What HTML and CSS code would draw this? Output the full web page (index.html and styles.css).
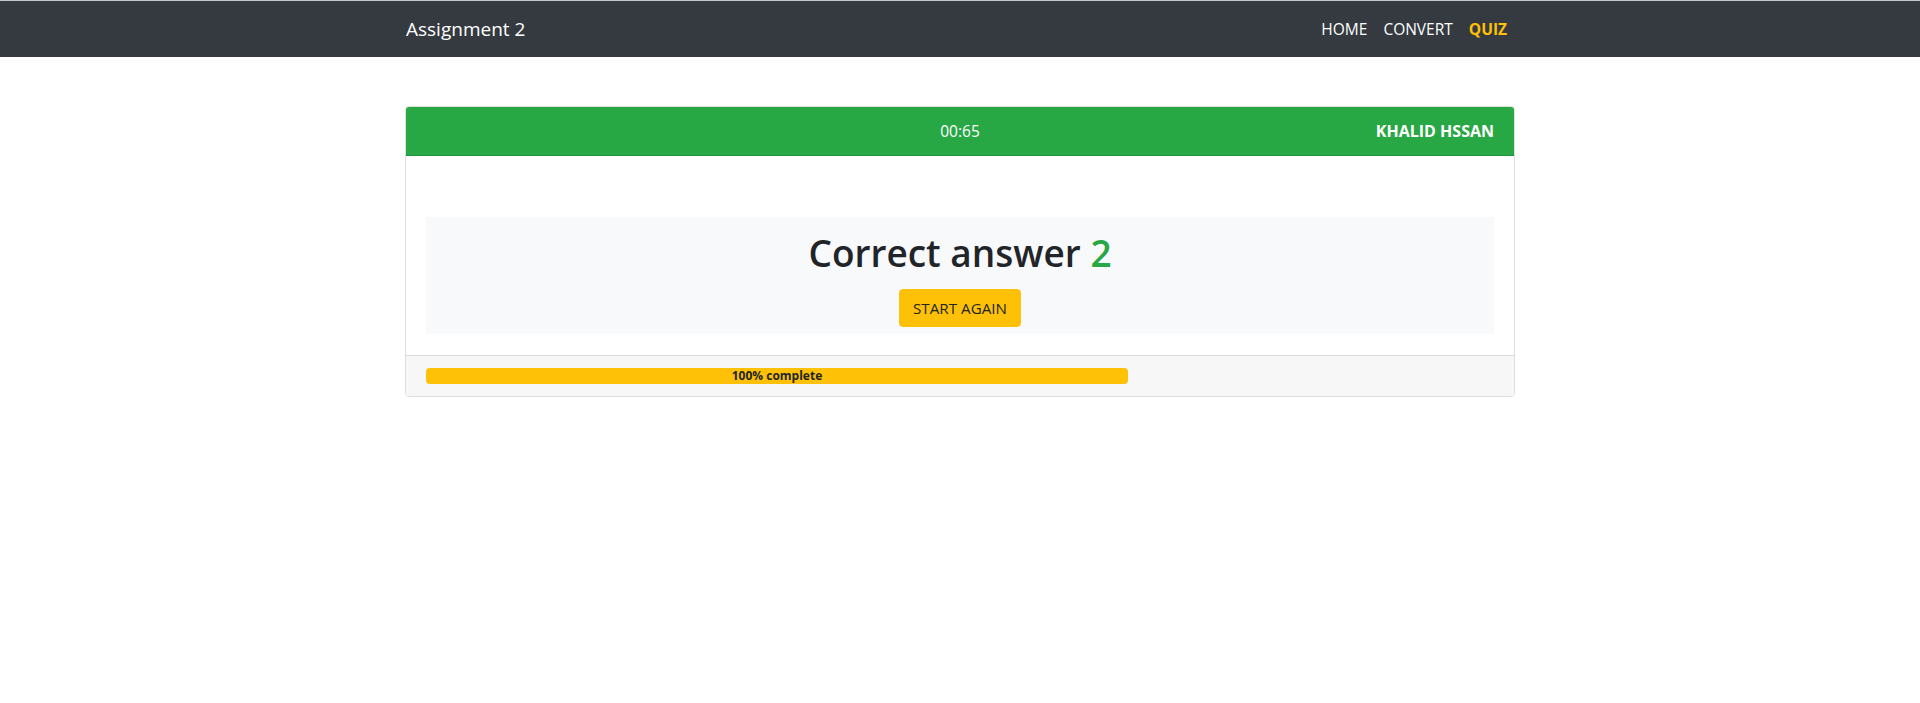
FILE: index.html
```html
<!DOCTYPE html>
<html lang="en">
<head>
<meta charset="utf-8">
<title>Assignment 2</title>
<link rel="stylesheet" href="styles.css">
</head>
<body>
<nav class="navbar">
  <div class="container nav-inner">
    <a class="brand" href="#">Assignment 2</a>
    <ul class="nav-links">
      <li><a class="nav-link" href="#">HOME</a></li>
      <li><a class="nav-link" href="#">CONVERT</a></li>
      <li><a class="nav-link active" href="#">QUIZ</a></li>
    </ul>
  </div>
</nav>
<main class="container main">
  <div class="card">
    <div class="card-header">
      <span class="spacer"></span>
      <span class="timer">00:65</span>
      <span class="user">KHALID HSSAN</span>
    </div>
    <div class="card-body">
      <div class="result">
        <h1 class="result-title">Correct answer <span class="score">2</span></h1>
        <button class="btn-warning" type="button">START AGAIN</button>
      </div>
    </div>
    <div class="card-footer">
      <div class="progress">
        <div class="progress-bar" style="width:100%">100% complete</div>
      </div>
    </div>
  </div>
</main>
</body>
</html>
```

FILE: styles.css
```css
* { box-sizing: border-box; }
html, body { margin: 0; padding: 0; }
body {
  font-family: "Open Sans", "Noto Sans", Arial, sans-serif;
  font-size: 15px;
  line-height: 24px;
  color: #212529;
  background: #fff;
}
.container {
  width: 1140px;
  margin: 0 auto;
  padding: 0 15px;
}
.navbar {
  background: #343a40;
  border-top: 1px solid #c4c6c8;
  height: 57px;
}
.nav-inner {
  height: 56px;
  display: flex;
  align-items: center;
  justify-content: space-between;
}
.brand {
  color: #fff;
  text-decoration: none;
  font-size: 19px;
  line-height: 30px;
  margin-left: 1px;
}
.nav-links {
  list-style: none;
  margin: 0;
  padding: 0;
  display: flex;
}
.nav-link {
  display: block;
  padding: 8px 8px;
  color: #fff;
  text-decoration: none;
  font-size: 15.5px;
}
.nav-link.active {
  color: #ffc107;
  font-weight: 700;
}
.main { padding-top: 49px; }
.card {
  border: 1px solid rgba(0,0,0,.125);
  border-radius: 4px;
  overflow: hidden;
}
.card-header {
  background: #28a745;
  color: #fff;
  padding: 12px 20px;
  border-bottom: 1px solid rgba(0,0,0,.125);
  display: grid;
  grid-template-columns: 1fr auto 1fr;
  align-items: center;
  height: 49px;
}
.timer { font-size: 15.5px; }
.user {
  justify-self: end;
  font-weight: 700;
  font-size: 16px;
}
.card-body {
  padding: 61px 20px 21px;
}
.result {
  background: #f8f9fa;
  height: 117px;
  text-align: center;
  padding-top: 8px;
}
.result-title {
  margin: 0 0 8px;
  font-size: 37px;
  font-weight: 600;
  line-height: 56px;
}
.score { color: #28a745; }
.btn-warning {
  font-family: inherit;
  background: #ffc107;
  color: #212529;
  border: 1px solid #ffc107;
  border-radius: 4px;
  padding: 6px 12px;
  font-size: 15.2px;
  line-height: 24px;
  height: 38px;
  width: 122px;
}
.card-footer {
  background: #f7f7f7;
  border-top: 1px solid rgba(0,0,0,.125);
  padding: 12px 20px;
  height: 41px;
}
.progress {
  width: 702px;
  height: 16px;
  background: #e9ecef;
  border-radius: 4px;
  overflow: hidden;
}
.progress-bar {
  height: 16px;
  background: #ffc107;
  color: #212529;
  font-size: 12px;
  font-weight: 700;
  line-height: 16px;
  text-align: center;
}
```
